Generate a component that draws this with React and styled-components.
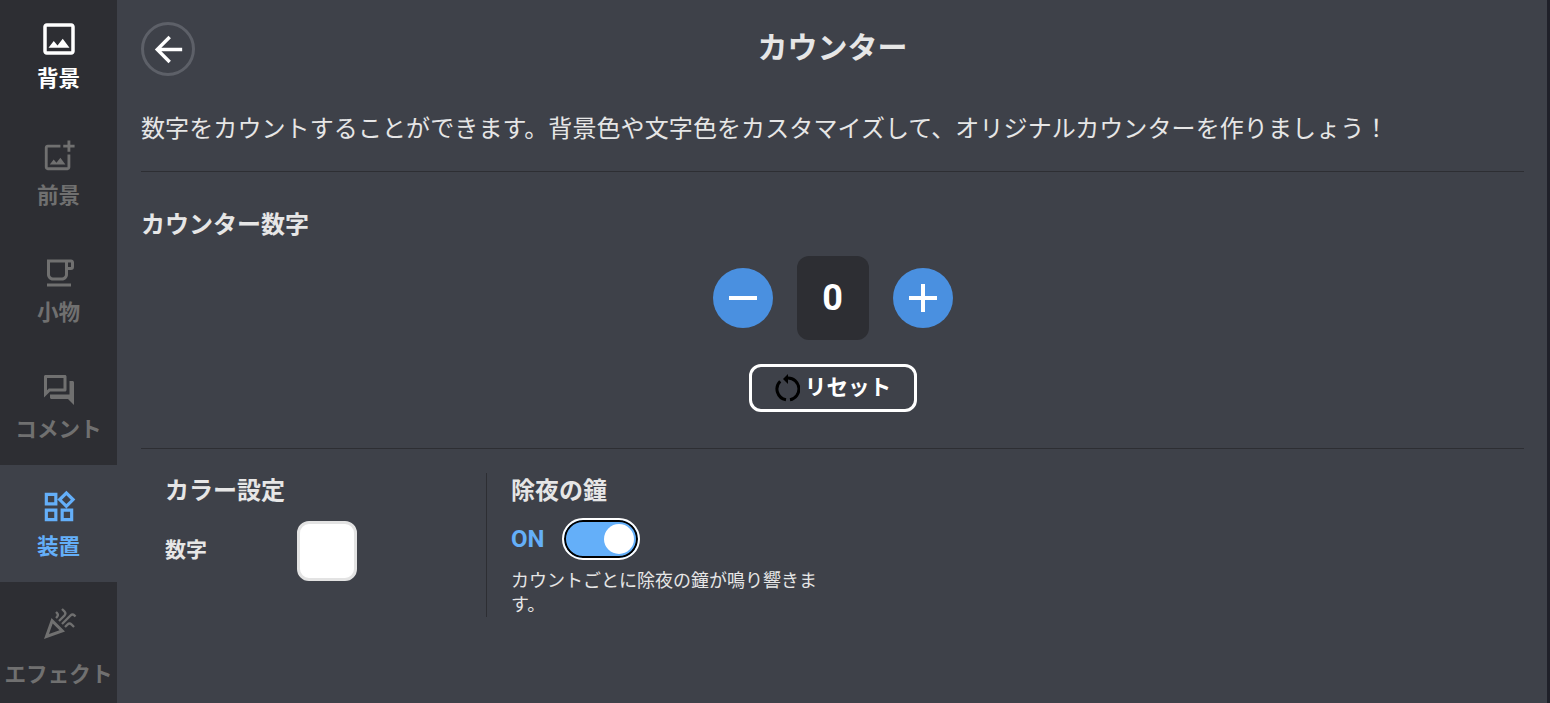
import React from 'react';
import styled, { createGlobalStyle } from 'styled-components';
import {
  MdOutlineImage,
  MdOutlineAddPhotoAlternate,
  MdOutlineFreeBreakfast,
  MdOutlineQuestionAnswer,
  MdOutlineWidgets,
  MdOutlineCelebration,
  MdArrowBack,
  MdRemove,
  MdAdd,
} from 'react-icons/md';

const GlobalStyle = createGlobalStyle`
  html, body {
    margin: 0;
    height: 100%;
    overflow: hidden;
    background: #1f2029;
  }
  body {
    font-family: "Liberation Sans", "Noto Sans CJK JP", sans-serif;
  }
`;

const Page = styled.div`
  display: flex;
  width: 1547px;
  height: 703px;
  background: #3e4149;
  color: #e6e6e6;
`;

const Sidebar = styled.nav`
  width: 117px;
  flex: none;
  background: #2d2e33;
  display: flex;
  flex-direction: column;
`;

const NavItem = styled.div`
  height: 117px;
  flex: none;
  display: flex;
  flex-direction: column;
  align-items: center;
  padding-top: 21px;
  box-sizing: border-box;
  background: ${(p) => (p.$active ? '#3e4149' : 'transparent')};
  color: ${(p) => p.$color || '#707070'};

  /* the list is scrolled a little, so the first item is cut off at the top */
  &:first-child {
    height: 114px;
    padding-top: 18px;
  }
`;

const NavIcon = styled.div`
  height: 42px;
  display: flex;
  align-items: center;
  justify-content: center;
`;

const NavLabel = styled.span`
  font-size: 21.6px;
  font-weight: 700;
  line-height: 30px;
  margin-top: ${(p) => p.$top}px;
  white-space: nowrap;
`;

const Main = styled.main`
  flex: 1;
  padding: 22px 23px 0 24px;
  box-sizing: border-box;
`;

const Header = styled.header`
  display: flex;
  align-items: center;
  height: 54px;
`;

const BackButton = styled.div`
  width: 54px;
  height: 54px;
  box-sizing: border-box;
  border: 3px solid #5d6068;
  border-radius: 50%;
  display: flex;
  align-items: center;
  justify-content: center;
  color: #fff;
`;

const Title = styled.h1`
  flex: 1;
  margin: 0 54px 2px 0;
  text-align: center;
  font-size: 30px;
  line-height: 48px;
  font-weight: 700;
  color: #e6e6e6;
`;

const Lead = styled.p`
  margin: 0;
  padding: 35px 0 24px;
  font-size: 24px;
  letter-spacing: 0.1px;
  line-height: 36px;
  color: #e6e6e6;
  border-bottom: 1px solid #2d2e33;
`;

const CounterSection = styled.section`
  border-bottom: 1px solid #2d2e33;
  padding: 36px 0 36px;
`;

const SectionTitle = styled.h2`
  margin: 0;
  font-size: 24px;
  line-height: 33px;
  font-weight: 700;
  color: #e6e6e6;
`;

const CounterRow = styled.div`
  display: flex;
  justify-content: center;
  align-items: center;
  gap: 24px;
  margin-top: 15px;
`;

const RoundButton = styled.div`
  width: 60px;
  height: 60px;
  border-radius: 50%;
  background: #4a90e0;
  color: #fff;
  display: flex;
  align-items: center;
  justify-content: center;
`;

const CountBox = styled.div`
  width: 72px;
  height: 84px;
  border-radius: 12px;
  background: #2d2e33;
  color: #fff;
  display: flex;
  align-items: center;
  justify-content: center;
  font-family: Roboto, sans-serif;
  font-size: 36px;
  font-weight: 700;
`;

const ResetRow = styled.div`
  display: flex;
  justify-content: center;
  margin-top: 24px;
`;

const ResetButton = styled.div`
  width: 168px;
  height: 48px;
  box-sizing: border-box;
  border: 3px solid #fff;
  border-radius: 12px;
  display: flex;
  align-items: center;
  justify-content: center;
  gap: 5px;
  color: #fff;
  font-size: 21.6px;
  font-weight: 700;
`;

const ResetLabel = styled.span`
  margin-bottom: 5px;
`;

const ResetIcon = styled.svg`
  width: 26px;
  height: 30px;
  fill: none;
  stroke: #000;
  stroke-width: 3;
`;

const Settings = styled.section`
  display: flex;
  padding-top: 24px;
`;

const ColorPanel = styled.div`
  width: 346px;
  height: 144px;
  flex: none;
  box-sizing: border-box;
  padding: 1px 0 0 24px;
  border-right: 1px solid #2d2e33;
`;

const BellPanel = styled.div`
  padding: 1px 0 0 24px;
  width: 330px;
  box-sizing: border-box;
`;

const ColorRow = styled.div`
  display: flex;
  align-items: center;
  margin-top: 14px;
`;

const ColorLabel = styled.span`
  width: 132px;
  font-size: 21px;
  font-weight: 700;
  padding-bottom: 6px;
`;

const Swatch = styled.div`
  width: 60px;
  height: 60px;
  box-sizing: border-box;
  background: #fff;
  border: 3px solid #e3e3e3;
  border-radius: 12px;
`;

const ToggleRow = styled.div`
  display: flex;
  align-items: center;
  gap: 18px;
  margin-top: 11px;
`;

const ToggleText = styled.span`
  font-family: Roboto, sans-serif;
  font-size: 24px;
  font-weight: 700;
  color: #64aff9;
`;

const Toggle = styled.div`
  width: 78px;
  height: 42px;
  box-sizing: border-box;
  border: 2px solid #fff;
  border-radius: 21px;
  background: #64aff9;
  box-shadow: inset 0 0 0 2px #000;
  display: flex;
  align-items: center;
  justify-content: flex-end;
  padding-right: 4px;
`;

const Knob = styled.div`
  width: 30px;
  height: 30px;
  border-radius: 50%;
  background: #fff;
`;

const Note = styled.p`
  margin: 9px 0 0;
  font-size: 18px;
  line-height: 24px;
  color: #e6e6e6;
`;

const navItems = [
  { label: '背景', Icon: MdOutlineImage, size: 42, color: '#fff' },
  { label: '前景', Icon: MdOutlineAddPhotoAlternate, size: 34 },
  { label: '小物', Icon: MdOutlineFreeBreakfast, size: 36 },
  { label: 'コメント', Icon: MdOutlineQuestionAnswer, size: 36 },
  { label: '装置', Icon: MdOutlineWidgets, size: 38, color: '#64aff9', active: true },
  { label: 'エフェクト', Icon: MdOutlineCelebration, size: 36, top: 15 },
];

const App = () => {
  return (
    <Page>
      <GlobalStyle />
      <Sidebar>
        {navItems.map(({ label, Icon, size, color, active, top = 4 }) => (
          <NavItem key={label} $color={color} $active={active}>
            <NavIcon>
              <Icon size={size} />
            </NavIcon>
            <NavLabel $top={top}>{label}</NavLabel>
          </NavItem>
        ))}
      </Sidebar>
      <Main>
        <Header>
          <BackButton>
            <MdArrowBack size={41} />
          </BackButton>
          <Title>カウンター</Title>
        </Header>
        <Lead>数字をカウントすることができます。背景色や文字色をカスタマイズして、オリジナルカウンターを作りましょう！</Lead>
        <CounterSection>
          <SectionTitle>カウンター数字</SectionTitle>
          <CounterRow>
            <RoundButton>
              <MdRemove size={48} />
            </RoundButton>
            <CountBox>0</CountBox>
            <RoundButton>
              <MdAdd size={48} />
            </RoundButton>
          </CounterRow>
          <ResetRow>
            <ResetButton>
              <ResetIcon viewBox="-1 0 26 30">
                <path d="M13 5a11 11 0 0 1 2 21.8" />
                <path d="M11 26.8A11 11 0 0 1 5.2 8.2" />
                <path d="M13 1 8 6l5 5z" fill="#000" stroke="none" />
              </ResetIcon>
              <ResetLabel>リセット</ResetLabel>
            </ResetButton>
          </ResetRow>
        </CounterSection>
        <Settings>
          <ColorPanel>
            <SectionTitle>カラー設定</SectionTitle>
            <ColorRow>
              <ColorLabel>数字</ColorLabel>
              <Swatch />
            </ColorRow>
          </ColorPanel>
          <BellPanel>
            <SectionTitle>除夜の鐘</SectionTitle>
            <ToggleRow>
              <ToggleText>ON</ToggleText>
              <Toggle>
                <Knob />
              </Toggle>
            </ToggleRow>
            <Note>カウントごとに除夜の鐘が鳴り響きます。</Note>
          </BellPanel>
        </Settings>
      </Main>
    </Page>
  );
};

export default App;
